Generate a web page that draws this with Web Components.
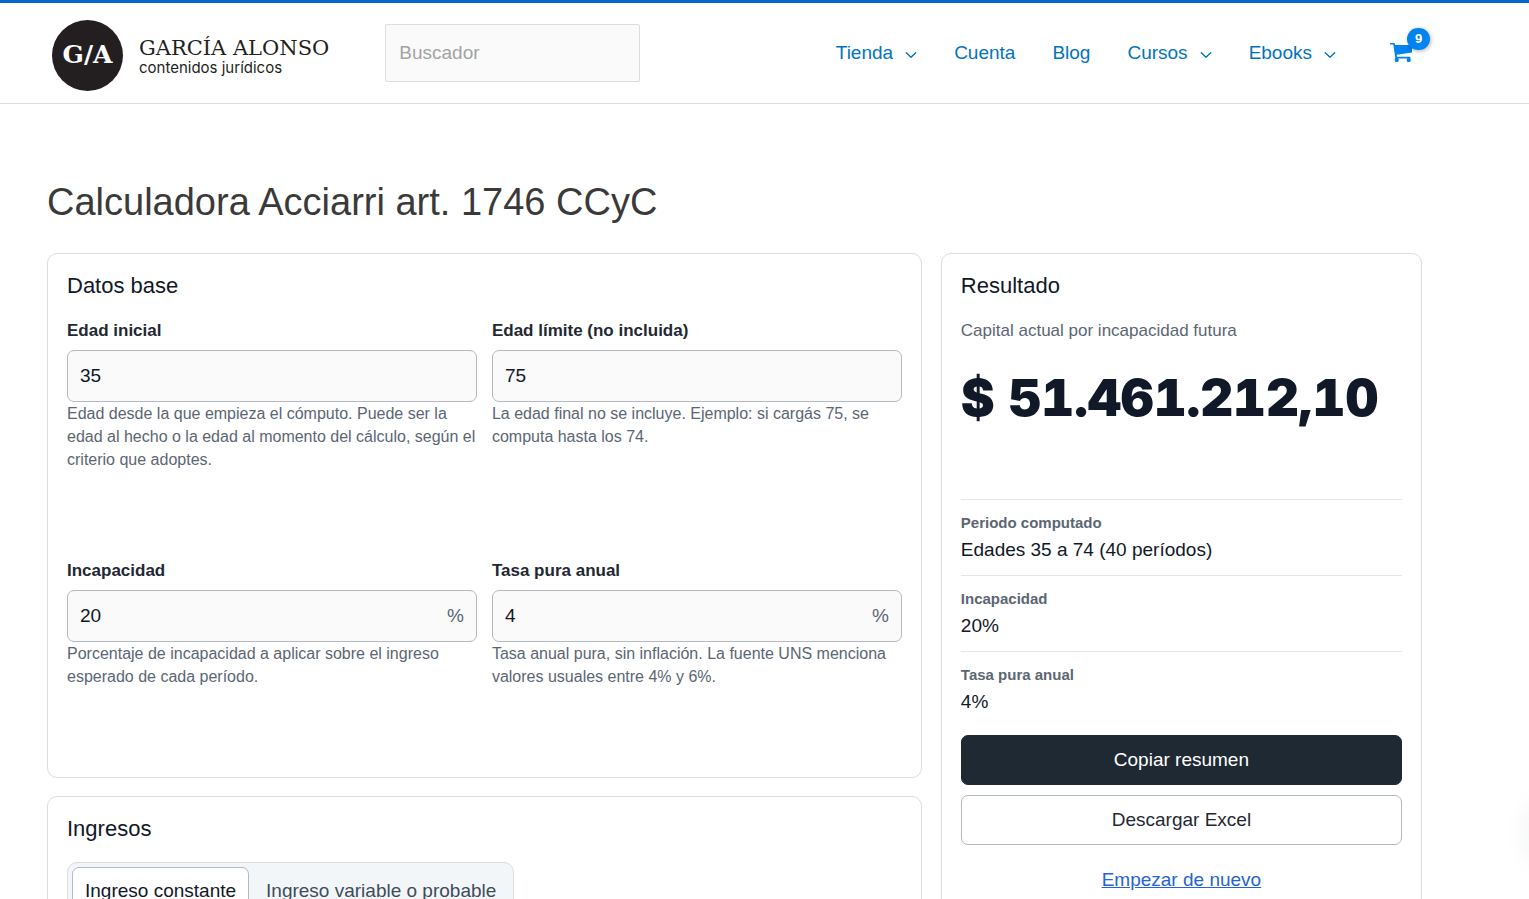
<!DOCTYPE html>
<html lang="es">
<head>
<meta charset="utf-8">
<meta name="viewport" content="width=device-width, initial-scale=1">
<title>Calculadora Acciarri art. 1746 CCyC</title>
<style>
    html{
        overflow-x: hidden;
    }
    body{
        margin: 0;
        background: #fff;
        color: #111827;
        font-family: "Liberation Sans", Arial, sans-serif;
        font-size: 19px;
        line-height: 30px;
    }
</style>
</head>
<body>

<ga-header>
    <ga-logo slot="logo"></ga-logo>
    <ga-search slot="search" placeholder="Buscador"></ga-search>
    <ga-nav-item href="#tienda" dropdown>Tienda</ga-nav-item>
    <ga-nav-item href="#cuenta">Cuenta</ga-nav-item>
    <ga-nav-item href="#blog">Blog</ga-nav-item>
    <ga-nav-item href="#cursos" dropdown>Cursos</ga-nav-item>
    <ga-nav-item href="#ebooks" dropdown>Ebooks</ga-nav-item>
    <ga-cart slot="cart" count="9"></ga-cart>
</ga-header>

<ga-calculator document-title="Calculadora Acciarri art. 1746 CCyC">
    <ga-card card-title="Datos base">
        <ga-field-grid>
            <ga-field label="Edad inicial" value="35">Edad desde la que empieza el cómputo. Puede ser la edad al hecho o la edad al momento del cálculo, según el criterio que adoptes.</ga-field>
            <ga-field label="Edad límite (no incluida)" value="75">La edad final no se incluye. Ejemplo: si cargás 75, se computa hasta los 74.</ga-field>
            <ga-field label="Incapacidad" value="20" unit="%">Porcentaje de incapacidad a aplicar sobre el ingreso esperado de cada período.</ga-field>
            <ga-field label="Tasa pura anual" value="4" unit="%">Tasa anual pura, sin inflación. La fuente UNS menciona valores usuales entre 4% y 6%.</ga-field>
        </ga-field-grid>
    </ga-card>
    <ga-card card-title="Ingresos">
        <ga-tabs>
            <ga-tab selected>Ingreso constante</ga-tab>
            <ga-tab>Ingreso variable o probable</ga-tab>
        </ga-tabs>
    </ga-card>
    <ga-card slot="aside" card-title="Resultado">
        <ga-total label="Capital actual por incapacidad futura">$ 51.461.212,10</ga-total>
        <ga-detail label="Periodo computado">Edades 35 a 74 (40 períodos)</ga-detail>
        <ga-detail label="Incapacidad">20%</ga-detail>
        <ga-detail label="Tasa pura anual">4%</ga-detail>
        <ga-actions></ga-actions>
    </ga-card>
</ga-calculator>

<ga-side-handle></ga-side-handle>

<script>
class GAElement extends HTMLElement {

    constructor(html) {
        super()
        const tmpl = document.createElement('template')
        tmpl.innerHTML = html
        this.attachShadow({ mode: 'open' })
        this.shadowRoot.appendChild(tmpl.content.cloneNode(true))
    }

    $(id) { return this.shadowRoot.getElementById(id) }
}

class GAHeader extends GAElement {
    constructor() {
        super(`
            <style>
                :host{
                    display: block;
                    border-top: 3px solid #0765cc;
                    border-bottom: 1px solid #dddddd;
                }
                header{
                    display: flex;
                    align-items: center;
                    box-sizing: border-box;
                    min-height: 100px;
                    padding: 0 116px 0 52px;
                }
                .search{
                    margin-left: 56px;
                }
                nav{
                    display: flex;
                    align-items: center;
                    gap: 37px;
                    margin-left: auto;
                }
                .cart{
                    margin-left: 54px;
                }
            </style>
            <header>
                <slot name="logo"></slot>
                <div class="search"><slot name="search"></slot></div>
                <nav aria-label="Principal"><slot></slot></nav>
                <div class="cart"><slot name="cart"></slot></div>
            </header>
        `)
    }
}

class GALogo extends GAElement {
    constructor() {
        super(`
            <style>
                a{
                    display: flex;
                    align-items: center;
                    gap: 16px;
                    padding-top: 4px;
                    color: #231f20;
                    text-decoration: none;
                }
                .mark{
                    display: flex;
                    align-items: center;
                    justify-content: center;
                    width: 71px;
                    height: 71px;
                    border-radius: 50%;
                    background: #231f20;
                    color: #fff;
                    font-family: "DejaVu Serif", serif;
                    font-size: 25px;
                    font-weight: bold;
                }
                .words{
                    display: flex;
                    flex-direction: column;
                    padding-top: 4px;
                }
                .name{
                    font-family: "DejaVu Serif", serif;
                    font-size: 21px;
                    line-height: 22px;
                }
                .tag{
                    font-family: Inter, sans-serif;
                    font-size: 15px;
                    line-height: 18px;
                }
            </style>
            <a href="#inicio">
                <span class="mark">G/A</span>
                <span class="words">
                    <span class="name">GARCÍA ALONSO</span>
                    <span class="tag">contenidos jurídicos</span>
                </span>
            </a>
        `)
    }
}

class GASearch extends GAElement {
    constructor() {
        super(`
            <style>
                input{
                    box-sizing: border-box;
                    width: 255px;
                    height: 58px;
                    padding: 0 13px;
                    border: 1px solid #dddddd;
                    border-radius: 2px;
                    background: #fafafa;
                    color: #666;
                    font: inherit;
                    display: block;
                }
                input::placeholder{
                    color: #a3a3a3;
                    opacity: 1;
                }
            </style>
            <input id="input" type="search">
        `)
    }

    connectedCallback() {
        const text = this.getAttribute('placeholder')
        this.$('input').placeholder = text
        this.$('input').setAttribute('aria-label', text)
    }
}

class GANavItem extends GAElement {
    constructor() {
        super(`
            <style>
                a{
                    display: flex;
                    align-items: center;
                    gap: 12px;
                    color: #0274be;
                    text-decoration: none;
                }
                svg{
                    display: none;
                    margin-top: 4px;
                }
                :host([dropdown]) svg{
                    display: block;
                }
            </style>
            <a id="link">
                <slot></slot>
                <svg width="12" height="8" viewBox="0 0 12 8" fill="none" stroke="currentColor" stroke-width="1.4" stroke-linecap="round" stroke-linejoin="round" aria-hidden="true">
                    <path d="M1.3 1.8 L6 6.2 L10.7 1.8"/>
                </svg>
            </a>
        `)
    }

    connectedCallback() {
        this.$('link').href = this.getAttribute('href')
    }
}

class GACart extends GAElement {
    constructor() {
        super(`
            <style>
                a{
                    display: block;
                    position: relative;
                    color: #0284f0;
                }
                svg{
                    display: block;
                }
                #count{
                    position: absolute;
                    left: 17px;
                    top: -15px;
                    width: 23px;
                    height: 22px;
                    border-radius: 11px;
                    background: #0284f0;
                    box-shadow: 1px 1px 4px rgba(0, 0, 0, 0.3);
                    color: #fff;
                    font-size: 13px;
                    font-weight: bold;
                    line-height: 21px;
                    text-align: center;
                }
            </style>
            <a href="#carrito" aria-label="Carrito">
                <svg width="23" height="20" viewBox="0 0 23 20" fill="currentColor" aria-hidden="true">
                    <path d="M0 0 H4.6 L5.2 2 H22 V9.6 L6.8 11.8 L7.1 13.8 H20.4 V15.6 H5.4 L3.3 1.6 H0 Z"/>
                    <rect x="4.8" y="15" width="3.8" height="4" rx="1.2"/>
                    <rect x="16.8" y="15" width="3.8" height="4" rx="1.2"/>
                </svg>
                <span id="count"></span>
            </a>
        `)
    }

    connectedCallback() {
        this.$('count').textContent = this.getAttribute('count')
    }
}

class GACalculator extends GAElement {
    constructor() {
        super(`
            <style>
                :host{
                    display: block;
                    padding: 74px 107px 48px 47px;
                }
                h1{
                    margin: 0 0 27px;
                    color: #3a3a3a;
                    font-size: 38px;
                    font-weight: normal;
                    line-height: 48px;
                }
                .layout{
                    display: grid;
                    grid-template-columns: minmax(0, 20fr) minmax(0, 11fr);
                    gap: 19px;
                    align-items: start;
                }
                .main{
                    display: grid;
                    gap: 18px;
                }
            </style>
            <main>
                <h1 id="title"></h1>
                <div class="layout">
                    <div class="main"><slot></slot></div>
                    <aside><slot name="aside"></slot></aside>
                </div>
            </main>
        `)
    }

    connectedCallback() {
        this.$('title').textContent = this.getAttribute('document-title')
    }
}

class GACard extends GAElement {
    constructor() {
        super(`
            <style>
                :host{
                    display: block;
                    padding: 19px;
                    border: 1px solid #d9dee3;
                    border-radius: 10px;
                    background: #fff;
                }
                h2{
                    margin: 0 0 20px;
                    font-size: 22px;
                    font-weight: normal;
                    line-height: 26px;
                }
            </style>
            <h2 id="title"></h2>
            <slot></slot>
        `)
    }

    connectedCallback() {
        this.$('title').textContent = this.getAttribute('card-title')
    }
}

class GAFieldGrid extends GAElement {
    constructor() {
        super(`
            <style>
                :host{
                    display: grid;
                    grid-template-columns: repeat(2, minmax(0, 1fr));
                    gap: 41px 15px;
                }
            </style>
            <slot></slot>
        `)
    }
}

class GAField extends GAElement {
    constructor() {
        super(`
            <style>
                :host{
                    display: block;
                }
                label{
                    display: block;
                    margin-bottom: 7px;
                    color: #1f2933;
                    font-size: 17px;
                    font-weight: bold;
                    line-height: 24px;
                }
                .control{
                    position: relative;
                }
                input{
                    display: block;
                    box-sizing: border-box;
                    width: 100%;
                    height: 52px;
                    padding: 0 12px;
                    border: 1px solid #b3b9bf;
                    border-radius: 7px;
                    background: #fafafa;
                    color: #111827;
                    font: inherit;
                }
                #unit{
                    position: absolute;
                    right: 13px;
                    top: 11px;
                    color: #5b6673;
                }
                p{
                    min-height: 116px;
                    margin: 0;
                    color: #5b6673;
                    font-size: 16px;
                    line-height: 23px;
                }
            </style>
            <label id="label" for="input"></label>
            <div class="control">
                <input id="input" type="text" inputmode="numeric" aria-describedby="hint">
                <span id="unit"></span>
            </div>
            <p id="hint"><slot></slot></p>
        `)
    }

    connectedCallback() {
        this.$('label').textContent = this.getAttribute('label')
        this.$('input').value = this.getAttribute('value')
        this.$('unit').textContent = this.getAttribute('unit') || ''
    }
}

class GATabs extends GAElement {
    constructor() {
        super(`
            <style>
                :host{
                    display: inline-flex;
                    gap: 4px;
                    padding: 4px;
                    border: 1px solid #d9dee3;
                    border-radius: 10px;
                    background: #f3f6f9;
                }
            </style>
            <slot></slot>
        `)
    }

    connectedCallback() {
        this.addEventListener('click', (e) => {
            const tab = e.target.closest('ga-tab')
            if (!tab) return
            this.querySelectorAll('ga-tab').forEach(t => t.toggleAttribute('selected', t === tab))
        })
    }
}

class GATab extends GAElement {
    constructor() {
        super(`
            <style>
                button{
                    height: 48px;
                    padding: 0 12px;
                    border: 1px solid transparent;
                    border-radius: 7px;
                    background: transparent;
                    color: #3e4c59;
                    font: inherit;
                    cursor: pointer;
                }
                :host([selected]) button{
                    border-color: #b3b9c5;
                    background: #fff;
                    color: #111827;
                }
            </style>
            <button type="button"><slot></slot></button>
        `)
    }
}

class GATotal extends GAElement {
    constructor() {
        super(`
            <style>
                :host{
                    display: block;
                    padding-bottom: 71px;
                }
                #label{
                    margin: 0 0 25px;
                    color: #5b6673;
                    font-size: 17px;
                    line-height: 24px;
                }
                .amount{
                    display: block;
                    font-family: "Arial Black", Inter, sans-serif;
                    font-size: 51px;
                    font-weight: 900;
                    font-variant-numeric: tabular-nums;
                    line-height: 60px;
                    white-space: nowrap;
                }
            </style>
            <p id="label"></p>
            <output class="amount"><slot></slot></output>
        `)
    }

    connectedCallback() {
        this.$('label').textContent = this.getAttribute('label')
    }
}

class GADetail extends GAElement {
    constructor() {
        super(`
            <style>
                :host{
                    display: block;
                    padding: 10px 0;
                    border-top: 1px solid #e2e6ea;
                }
                #label{
                    display: block;
                    color: #5b6673;
                    font-size: 15px;
                    font-weight: bold;
                    line-height: 25px;
                }
            </style>
            <span id="label"></span>
            <slot></slot>
        `)
    }

    connectedCallback() {
        this.$('label').textContent = this.getAttribute('label')
    }
}

class GAActions extends GAElement {
    constructor() {
        super(`
            <style>
                :host{
                    display: grid;
                    gap: 10px;
                    padding-top: 8px;
                }
                button{
                    height: 50px;
                    border: 1px solid #b3b9bf;
                    border-radius: 7px;
                    background: #fff;
                    color: #1f2933;
                    font: inherit;
                    cursor: pointer;
                }
                .primary{
                    border-color: #1f2933;
                    background: #1f2933;
                    color: #fff;
                }
                a{
                    justify-self: center;
                    padding: 10px 0;
                    color: #2463d6;
                }
            </style>
            <button type="button" class="primary">Copiar resumen</button>
            <button type="button">Descargar Excel</button>
            <a href="#nuevo">Empezar de nuevo</a>
        `)
    }
}

// drawer handle parked just past the right edge, only its shadow shows
class GASideHandle extends GAElement {
    constructor() {
        super(`
            <style>
                :host{
                    position: fixed;
                    right: -64px;
                    bottom: 36px;
                    width: 60px;
                    height: 60px;
                    border-radius: 30px;
                    box-shadow: 0 0 32px rgba(10, 40, 40, 0.1);
                }
            </style>
        `)
    }
}

window.customElements.define('ga-header', GAHeader);
window.customElements.define('ga-logo', GALogo);
window.customElements.define('ga-search', GASearch);
window.customElements.define('ga-nav-item', GANavItem);
window.customElements.define('ga-cart', GACart);
window.customElements.define('ga-calculator', GACalculator);
window.customElements.define('ga-card', GACard);
window.customElements.define('ga-field-grid', GAFieldGrid);
window.customElements.define('ga-field', GAField);
window.customElements.define('ga-tabs', GATabs);
window.customElements.define('ga-tab', GATab);
window.customElements.define('ga-total', GATotal);
window.customElements.define('ga-detail', GADetail);
window.customElements.define('ga-actions', GAActions);
window.customElements.define('ga-side-handle', GASideHandle);
</script>
</body>
</html>
